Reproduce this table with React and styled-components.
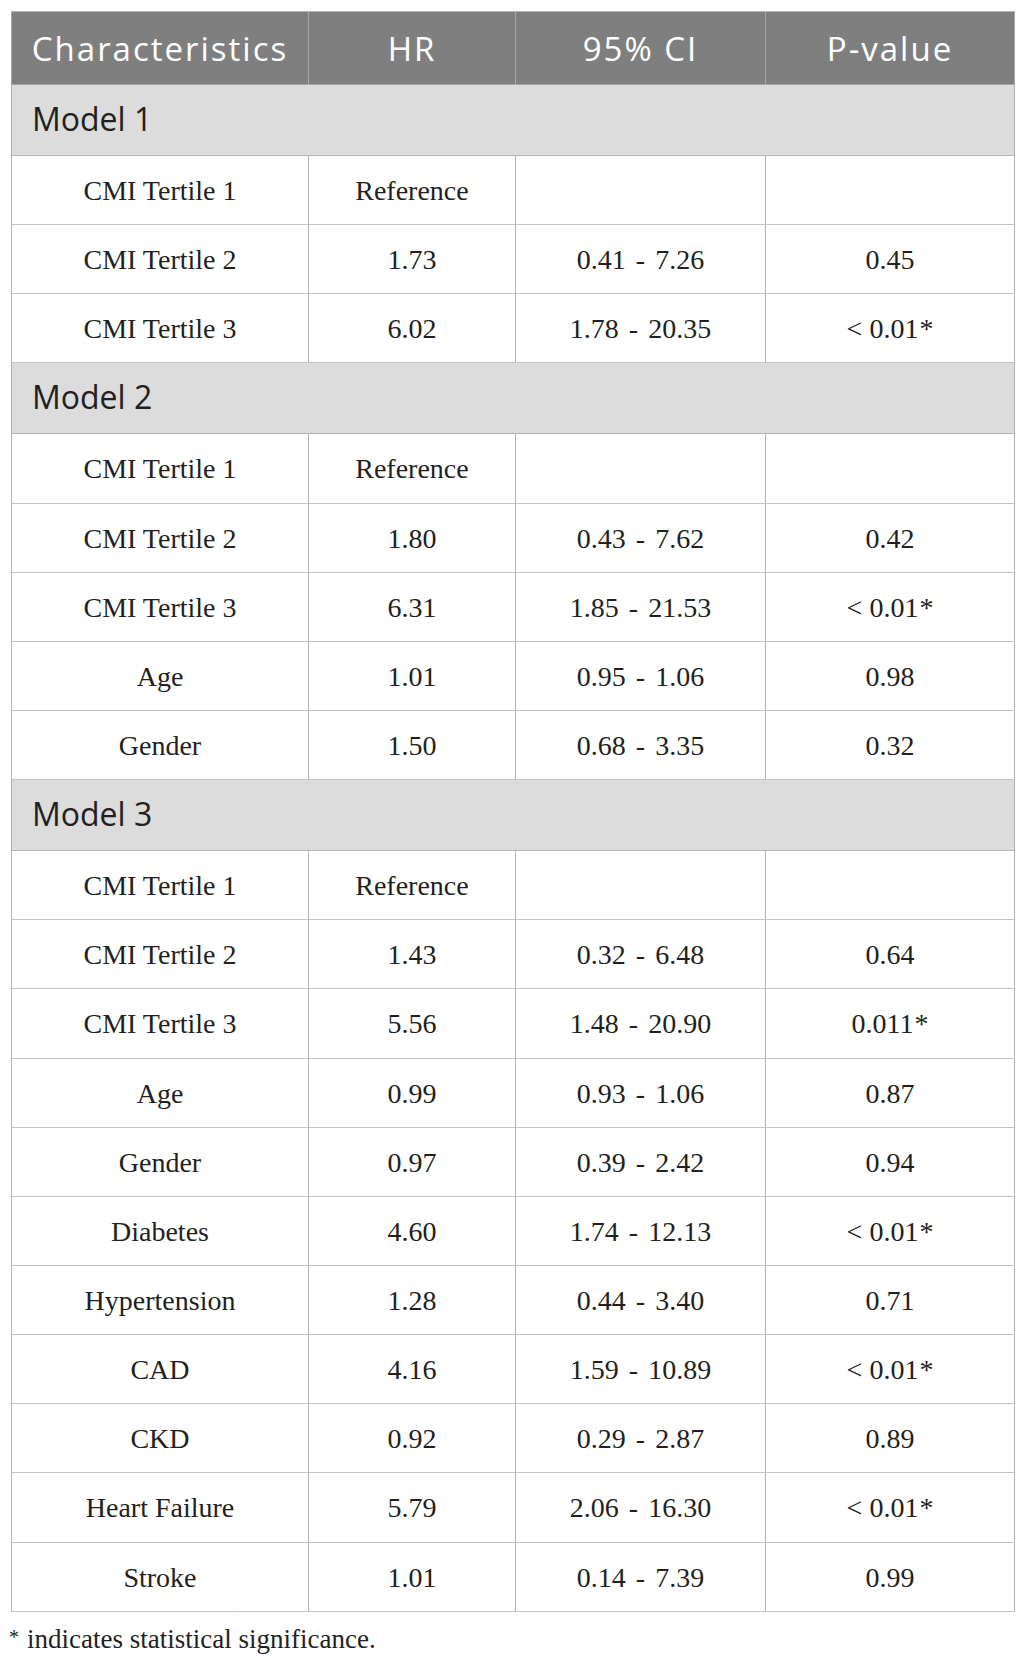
import React from "react";
import styled, { createGlobalStyle } from "styled-components";

const GlobalStyle = createGlobalStyle`
  html, body { margin: 0; padding: 0; background: #ffffff; }
`;

const Page = styled.div`
  padding: 11px 0 0 11px;
  width: 1003px;
`;

const Table = styled.table`
  border-collapse: collapse;
  table-layout: fixed;
  width: 1003px;
  border: 1px solid #b4b4b4;
`;

const HeadCell = styled.th`
  height: 72px;
  padding: 0;
  background: #7f7f7f;
  color: #ffffff;
  font-family: "Open Sans", "Liberation Sans", sans-serif;
  font-weight: 400;
  font-size: 33px;
  letter-spacing: 2px;
  text-align: center;
  vertical-align: middle;
  border: 1px solid #a6a6a6;
  border-top: 1px solid #b4b4b4;
`;

const GroupCell = styled.td`
  height: 67px;
  padding: 0 0 3px 20px;
  background: #dcdcdc;
  color: #231f20;
  font-family: "Open Sans", "Liberation Sans", sans-serif;
  font-size: 32px;
  text-align: left;
  vertical-align: middle;
  border: 1px solid #b4b4b4;
`;

const Cell = styled.td`
  height: 66.15px;
  padding: 2px 0 0;
  color: #231f20;
  font-family: "Liberation Serif", "Times New Roman", serif;
  font-size: 28px;
  text-align: center;
  vertical-align: middle;
  border: 1px solid #c4c4c4;
  border-left-color: #b4b4b4;
  border-right-color: #b4b4b4;
  word-spacing: ${(p) => (p.$range ? "3px" : "0")};
  white-space: nowrap;
`;

const Star = styled.span`
  margin-left: 1px;
`;

const Note = styled.p`
  margin: 10px 0 0 -2px;
  font-family: "Liberation Serif", "Times New Roman", serif;
  font-size: 27px;
  line-height: 31px;
  color: #231f20;
`;

const NoteStar = styled.span`
  font-size: 20px;
  vertical-align: 4px;
  margin-right: 8px;
`;

const groups = [
  {
    name: "Model 1",
    rows: [
      ["CMI Tertile 1", "Reference", "", ""],
      ["CMI Tertile 2", "1.73", "0.41 - 7.26", "0.45"],
      ["CMI Tertile 3", "6.02", "1.78 - 20.35", "< 0.01*"],
    ],
  },
  {
    name: "Model 2",
    rows: [
      ["CMI Tertile 1", "Reference", "", ""],
      ["CMI Tertile 2", "1.80", "0.43 - 7.62", "0.42"],
      ["CMI Tertile 3", "6.31", "1.85 - 21.53", "< 0.01*"],
      ["Age", "1.01", "0.95 - 1.06", "0.98"],
      ["Gender", "1.50", "0.68 - 3.35", "0.32"],
    ],
  },
  {
    name: "Model 3",
    rows: [
      ["CMI Tertile 1", "Reference", "", ""],
      ["CMI Tertile 2", "1.43", "0.32 - 6.48", "0.64"],
      ["CMI Tertile 3", "5.56", "1.48 - 20.90", "0.011*"],
      ["Age", "0.99", "0.93 - 1.06", "0.87"],
      ["Gender", "0.97", "0.39 - 2.42", "0.94"],
      ["Diabetes", "4.60", "1.74 - 12.13", "< 0.01*"],
      ["Hypertension", "1.28", "0.44 - 3.40", "0.71"],
      ["CAD", "4.16", "1.59 - 10.89", "< 0.01*"],
      ["CKD", "0.92", "0.29 - 2.87", "0.89"],
      ["Heart Failure", "5.79", "2.06 - 16.30", "< 0.01*"],
      ["Stroke", "1.01", "0.14 - 7.39", "0.99"],
    ],
  },
];

function PValue({ value }) {
  if (value.endsWith("*")) {
    return (
      <>
        {value.slice(0, -1)}
        <Star>*</Star>
      </>
    );
  }
  return value;
}

export default function App() {
  return (
    <>
      <GlobalStyle />
      <Page>
        <Table>
          <colgroup>
            <col style={{ width: 297 }} />
            <col style={{ width: 207 }} />
            <col style={{ width: 250 }} />
            <col style={{ width: 249 }} />
          </colgroup>
          <thead>
            <tr>
              <HeadCell>Characteristics</HeadCell>
              <HeadCell>HR</HeadCell>
              <HeadCell>95% CI</HeadCell>
              <HeadCell>P-value</HeadCell>
            </tr>
          </thead>
          <tbody>
            {groups.map((g) => (
              <React.Fragment key={g.name}>
                <tr>
                  <GroupCell colSpan={4}>{g.name}</GroupCell>
                </tr>
                {g.rows.map((r, i) => (
                  <tr key={g.name + i}>
                    <Cell>{r[0]}</Cell>
                    <Cell>{r[1]}</Cell>
                    <Cell $range>{r[2]}</Cell>
                    <Cell>
                      <PValue value={r[3]} />
                    </Cell>
                  </tr>
                ))}
              </React.Fragment>
            ))}
          </tbody>
        </Table>
        <Note>
          <NoteStar>*</NoteStar>indicates statistical significance.
        </Note>
      </Page>
    </>
  );
}
